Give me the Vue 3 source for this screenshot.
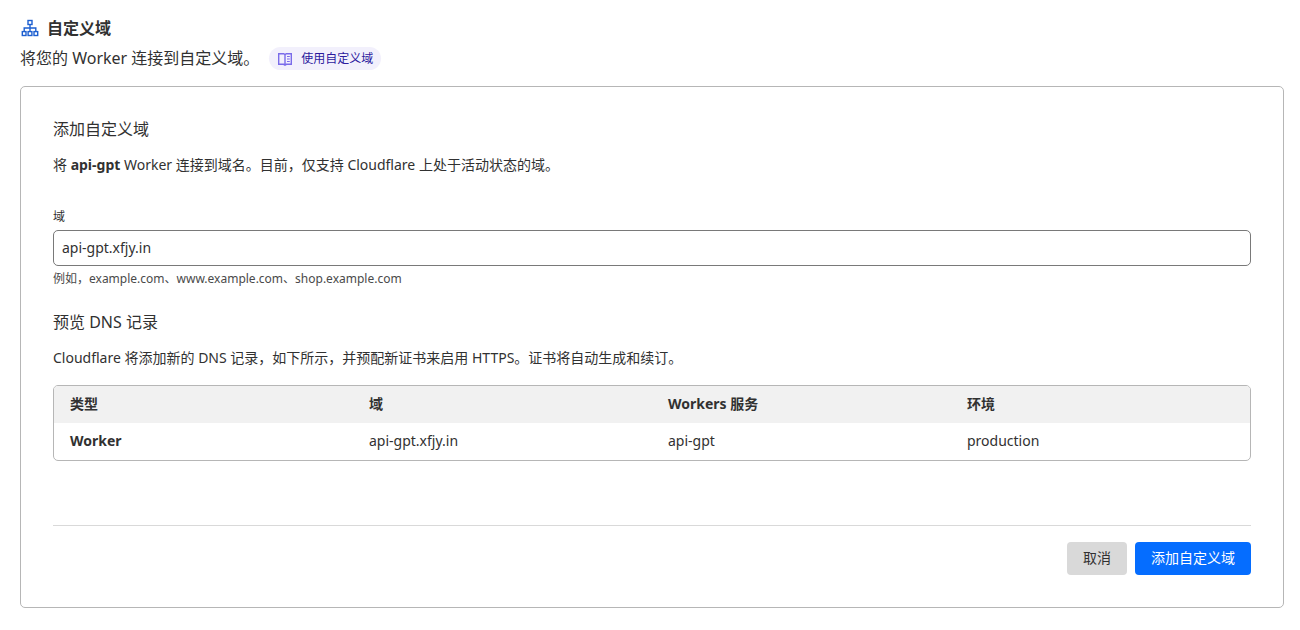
<script setup>
import { ref } from 'vue'

const domain = ref('api-gpt.xfjy.in')
const service = 'api-gpt'
const columns = ['类型', '域', 'Workers 服务', '环境']
</script>

<template>
  <main class="page">
    <header>
      <h1 class="title">
        <svg class="title-icon" viewBox="0 0 18 18" width="18" height="18" aria-hidden="true">
          <g fill="none" stroke="#1d5fd0" stroke-width="1.4">
            <rect x="7" y="1.5" width="4" height="4" />
            <rect x="1.3" y="12.6" width="3.7" height="3.9" />
            <rect x="7.1" y="12.6" width="3.8" height="3.9" />
            <rect x="13" y="12.6" width="3.7" height="3.9" />
            <path d="M9 5.500v7.100M3.2 12.600V9h11.600v3.600" />
          </g>
        </svg>
        自定义域
      </h1>
      <div class="intro">
        <span>将您的 Worker 连接到自定义域。</span>
        <a class="doc-link" href="#">
          <svg viewBox="0 0 16 16" width="16" height="16" aria-hidden="true">
            <g fill="none" stroke="#7a6bea" stroke-width="1.4">
              <path d="M1.700 2.700h5.1L8 3.700l1.200-1h5.100v10.600H9.400L8 14.200l-1.400-.9H1.700zM8 3.700v10.200" />
              <path d="M10 5.500h2.800M10 8h2.800M10 10.500h2.800" stroke-width="1.2" />
            </g>
          </svg>
          使用自定义域
        </a>
      </div>
    </header>

    <form class="card" @submit.prevent>
      <h2>添加自定义域</h2>
      <p>将 <strong>{{ service }}</strong> Worker 连接到域名。目前，仅支持 Cloudflare 上处于活动状态的域。</p>

      <div class="field">
        <label for="domain">域</label>
        <input id="domain" v-model="domain" type="text" aria-describedby="domain-help" />
        <small id="domain-help">例如，example.com、www.example.com、shop.example.com</small>
      </div>

      <h2>预览 DNS 记录</h2>
      <p>Cloudflare 将添加新的 DNS 记录，如下所示，并预配新证书来启用 HTTPS。证书将自动生成和续订。</p>

      <table>
        <thead>
          <tr>
            <th v-for="column in columns" :key="column" scope="col">{{ column }}</th>
          </tr>
        </thead>
        <tbody>
          <tr>
            <th scope="row">Worker</th>
            <td>{{ domain }}</td>
            <td>{{ service }}</td>
            <td>production</td>
          </tr>
        </tbody>
      </table>

      <footer class="actions">
        <button type="button" class="secondary">取消</button>
        <button type="submit" class="primary">添加自定义域</button>
      </footer>
    </form>
  </main>
</template>

<style>
body {
  background: #fff;
}
</style>

<style scoped>
.page {
  padding: 16px 16px 16px 20px;
  font-family: "Noto Sans", "Noto Sans CJK SC", sans-serif;
  font-size: 14px;
  line-height: 20px;
  color: #313131;
}
.title {
  display: flex;
  align-items: center;
  gap: 8px;
  margin: 0;
  font-size: 16px;
  line-height: 24px;
  font-weight: 600;
}
.title-icon {
  margin-left: 1px;
}
.intro {
  display: flex;
  align-items: center;
  gap: 10px;
  margin-top: 7px;
  font-size: 16px;
  line-height: 23px;
}
.doc-link {
  display: flex;
  align-items: center;
  gap: 8px;
  padding: 0 8px;
  border-radius: 12px;
  background: #f2f0fc;
  color: #2c1a9e;
  font-size: 12px;
  text-decoration: none;
}
.card {
  margin-top: 16px;
  padding: 32px;
  border: 1px solid #b6b6b6;
  border-radius: 5px;
}
h2 {
  margin: 0;
  font-size: 16px;
  line-height: 20px;
  font-weight: 400;
}
p {
  margin: 16px 0 0;
}
strong {
  font-weight: 700;
}
.field {
  display: flex;
  flex-direction: column;
  margin: 34px 0 25px;
}
label {
  font-size: 12px;
  line-height: 16px;
}
input {
  box-sizing: border-box;
  height: 36px;
  margin: 5px 0;
  padding: 0 8px 2px;
  border: 1px solid #797979;
  border-radius: 5px;
  background: #fff;
  color: inherit;
  font: inherit;
}
small {
  font-size: 12px;
  line-height: 16px;
  color: #4a4a4a;
}
table {
  width: 100%;
  margin-top: 17px;
  border: 1px solid #b6b6b6;
  border-radius: 5px;
  border-spacing: 0;
  table-layout: fixed;
  overflow: hidden;
}
th,
td {
  height: 35px;
  padding: 0 16px 2px;
  text-align: left;
}
th {
  font-weight: 700;
}
thead th {
  background: #f1f1f1;
}
.actions {
  display: flex;
  justify-content: flex-end;
  gap: 8px;
  margin-top: 64px;
  padding-top: 16px;
  border-top: 1px solid #d9d9d9;
}
button {
  height: 33px;
  padding: 0 16px 2px;
  border: 0;
  border-radius: 4px;
  font: inherit;
  cursor: pointer;
}
.secondary {
  background: #d9d9d9;
  color: #313131;
}
.primary {
  background: #056dff;
  color: #fff;
}
</style>
